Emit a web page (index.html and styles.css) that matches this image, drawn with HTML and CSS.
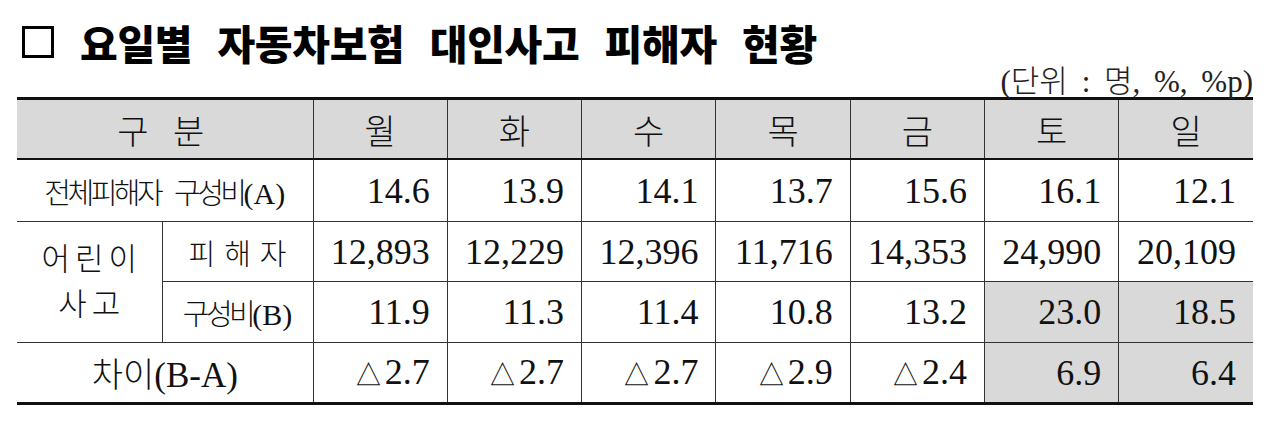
FILE: index.html
```html
<!DOCTYPE html>
<html lang="ko">
<head>
<meta charset="utf-8">
<title>요일별 자동차보험 대인사고 피해자 현황</title>
<link rel="stylesheet" href="styles.css">
</head>
<body>
<div class="wrap">
  <h1 class="title"><span class="box"></span><span class="title-text">요일별 자동차보험 대인사고 피해자 현황</span></h1>
  <div class="unit">(단위 : 명, %, %p)</div>
  <table class="data">
    <colgroup>
      <col class="c-a"><col class="c-b">
      <col class="c-d"><col class="c-d"><col class="c-d"><col class="c-d"><col class="c-d"><col class="c-d"><col class="c-d">
    </colgroup>
    <thead>
      <tr class="head">
        <th colspan="2"><span class="gubun">구 분</span></th>
        <th>월</th><th>화</th><th>수</th><th>목</th><th>금</th><th>토</th><th>일</th>
      </tr>
    </thead>
    <tbody>
      <tr class="r1">
        <td colspan="2" class="label"><span class="cond">전체피해자 구성비<span class="lat">(A)</span></span></td>
        <td class="num">14.6</td><td class="num">13.9</td><td class="num">14.1</td><td class="num">13.7</td><td class="num">15.6</td><td class="num">16.1</td><td class="num">12.1</td>
      </tr>
      <tr class="r2">
        <td rowspan="2" class="label kids"><span class="line">어린이</span><span class="line">사고</span></td>
        <td class="label sub"><span class="wide">피해자</span></td>
        <td class="num">12,893</td><td class="num">12,229</td><td class="num">12,396</td><td class="num">11,716</td><td class="num">14,353</td><td class="num">24,990</td><td class="num">20,109</td>
      </tr>
      <tr class="r3">
        <td class="label sub"><span class="cond">구성비<span class="lat">(B)</span></span></td>
        <td class="num">11.9</td><td class="num">11.3</td><td class="num">11.4</td><td class="num">10.8</td><td class="num">13.2</td><td class="num shade">23.0</td><td class="num shade">18.5</td>
      </tr>
      <tr class="r4">
        <td colspan="2" class="label diff">차이<span class="lat">(B-A)</span></td>
        <td class="num"><span class="tri">△</span>2.7</td><td class="num"><span class="tri">△</span>2.7</td><td class="num"><span class="tri">△</span>2.7</td><td class="num"><span class="tri">△</span>2.9</td><td class="num"><span class="tri">△</span>2.4</td><td class="num shade">6.9</td><td class="num shade">6.4</td>
      </tr>
    </tbody>
  </table>
</div>
</body>
</html>
```

FILE: styles.css
```css
html, body {
  margin: 0;
  padding: 0;
  background: #ffffff;
  color: #111111;
}

.wrap {
  padding-left: 17px;
  width: 1236px;
}

.title {
  margin: 0;
  padding-top: 18px;
  height: 48px;
  display: flex;
  align-items: center;
  font-family: "Noto Sans CJK KR", "Noto Sans", sans-serif;
  font-weight: 900;
  font-size: 41px;
  line-height: 48px;
  color: #000000;
}

.box {
  display: inline-block;
  width: 26px;
  height: 26px;
  border: 3px solid #000000;
  margin-left: 5px;
  margin-right: 26px;
}

.title-text {
  word-spacing: 14px;
  letter-spacing: -0.3px;
}

.unit {
  height: 31px;
  line-height: 31px;
  text-align: right;
  font-family: "Liberation Serif", "Noto Sans CJK KR", serif;
  font-size: 31px;
  word-spacing: 6px;
  font-weight: 300;
  color: #222222;
}

.data {
  width: 1236px;
  border-collapse: collapse;
  table-layout: fixed;
  font-family: "Liberation Serif", "Noto Sans CJK KR", serif;
  color: #111111;
}

.c-a { width: 145px; }
.c-b { width: 151px; }
.c-d { width: 134.3px; }

.data th,
.data td {
  border: 1px solid #333333;
  padding: 0;
  vertical-align: middle;
}

.data tr > :first-child { border-left: none; }
.data tr > :last-child { border-right: none; }
.data .r3 > :first-child { border-left: 1px solid #333333; }

.data thead th {
  border-top: 3px solid #111111;
  border-bottom: 2px solid #111111;
  background: #d9d9d9;
  font-weight: 300;
  font-size: 34px;
  height: 58px;
  text-align: center;
}

.gubun {
  letter-spacing: 8px;
}

.r1 td { height: 61px; }
.r2 td { height: 59px; }
.r3 td { height: 60px; }
.r4 td {
  height: 59px;
  border-bottom: 3px solid #111111;
}

.num {
  text-align: right;
  padding-right: 17px !important;
  font-size: 36px;
}

.shade {
  background: #d9d9d9;
}

.label {
  text-align: center;
  font-weight: 300;
}

.cond {
  display: inline-block;
  font-size: 29px;
  letter-spacing: -3.5px;
  word-spacing: 10px;
}

.cond .lat {
  letter-spacing: 0;
  font-size: 30px;
}

.kids {
  font-size: 31px;
  line-height: 45px;
}

.kids .line {
  display: block;
  letter-spacing: 5px;
  margin-right: -5px;
}

.wide {
  font-size: 29px;
  letter-spacing: 9px;
  margin-right: -9px;
}

.diff {
  font-size: 34px;
}

.diff .lat {
  font-size: 35px;
}

.tri {
  font-family: "DejaVu Sans", sans-serif;
  font-size: 29px;
  font-weight: 300;
  margin-right: 2px;
}
```
